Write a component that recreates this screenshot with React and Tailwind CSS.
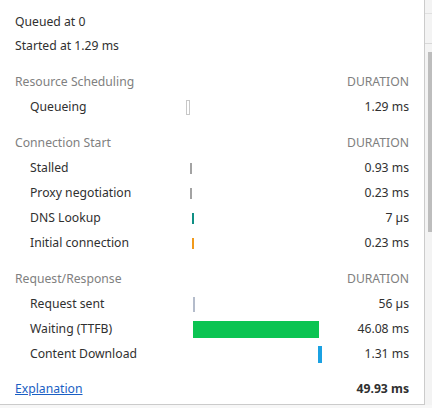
import React from "react";

const TOTAL = 49.93;
const TRACK = 136;

const sections = [
  {
    title: "Resource Scheduling",
    rows: [
      { label: "Queueing", start: 0, dur: 1.29, text: "1.29 ms", kind: "hollow", h: "h-[15px]" },
    ],
  },
  {
    title: "Connection Start",
    rows: [
      { label: "Stalled", start: 1.45, dur: 0.6, text: "0.93 ms", color: "bg-[#a3a3a3]", h: "h-[11px]" },
      { label: "Proxy negotiation", start: 1.6, dur: 0.23, text: "0.23 ms", color: "bg-[#a3a3a3]", h: "h-[11px]" },
      { label: "DNS Lookup", start: 2.2, dur: 0.007, text: "7 µs", color: "bg-[#0f8f84]", h: "h-[11px]" },
      { label: "Initial connection", start: 2.2, dur: 0.23, text: "0.23 ms", color: "bg-[#f19a1b]", h: "h-[11px]" },
    ],
  },
  {
    title: "Request/Response",
    rows: [
      { label: "Request sent", start: 2.6, dur: 0.056, text: "56 µs", color: "bg-[#b4bccb]", h: "h-[15px]" },
      { label: "Waiting (TTFB)", start: 2.6, dur: 46.08, text: "46.08 ms", color: "bg-[#0bc452]", h: "h-[17px]" },
      { label: "Content Download", start: 48.6, dur: 1.31, text: "1.31 ms", color: "bg-[#1ba1e2]", h: "h-[17px]" },
    ],
  },
];

function Bar({ row }) {
  const left = (row.start / TOTAL) * TRACK;
  const width = Math.max(2, (row.dur / TOTAL) * TRACK);
  return (
    <div className="w-[136px] flex items-center">
      <div
        style={{ marginLeft: left, width }}
        className={
          row.kind === "hollow"
            ? `${row.h} border border-[#c8c8c8] bg-white min-w-[4px]`
            : `${row.h} ${row.color}`
        }
      />
    </div>
  );
}

export default function App() {
  return (
    <div
      className="w-[432px] h-[408px] bg-[#f3f3f3] flex flex-col overflow-hidden text-[#303030]"
      style={{ fontFamily: '"Noto Sans", "Open Sans", sans-serif' }}
    >
      <div className="flex h-[405px]">
        <div className="w-[425px] h-[405px] bg-white border-r border-b border-[#cbcbcb] pl-[15px] pr-[15px] pt-[10px] text-[12.2px]">
          <div className="h-[24px] flex items-center">Queued at 0</div>
          <div className="h-[25px] flex items-center">Started at 1.29 ms</div>
          {sections.map((s) => (
            <div key={s.title} className="mt-[11px]">
              <div className="h-[25px] flex items-center justify-between text-[#808080]">
                <span>{s.title}</span>
                <span>DURATION</span>
              </div>
              {s.rows.map((r) => (
                <div key={r.label} className="h-[25px] flex items-center">
                  <div className="w-[171px] pl-[15px]">{r.label}</div>
                  <Bar row={r} />
                  <div className="flex-1 text-right">{r.text}</div>
                </div>
              ))}
            </div>
          ))}
          <div className="mt-[10px] h-[25px] flex items-center justify-between">
            <a href="#" className="text-[#1a5fc4] underline">Explanation</a>
            <span className="font-bold">49.93 ms</span>
          </div>
        </div>
        <div className="flex-1 flex flex-col">
          <div className="h-[14px] border-b border-[#e0e0e0]" />
          <div className="h-[30px] border-b border-[#d8d8d8]" />
          <div className="h-[8px]" />
          <div className="h-[180px] bg-[#bdbdbd] ml-[3px]" />
        </div>
      </div>
      <div className="flex-1 bg-[#f7f7f7]" />
    </div>
  );
}
